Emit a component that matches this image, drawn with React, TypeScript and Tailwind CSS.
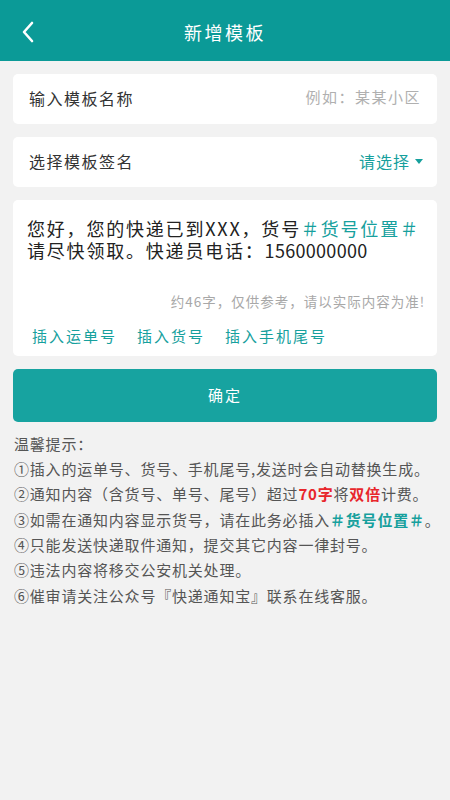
import React from 'react';

const font = { fontFamily: '"Noto Sans CJK SC", "Noto Sans", sans-serif' };

const BackIcon = () => (
  <svg width="14" height="22" viewBox="0 0 14 22" fill="none">
    <path d="M11 2 L3 11 L11 20" stroke="white" strokeWidth="2.6" strokeLinecap="round" strokeLinejoin="round" />
  </svg>
);

const tips: React.ReactNode[] = [
  '①插入的运单号、货号、手机尾号,发送时会自动替换生成。',
  <>
    ②通知内容（含货号、单号、尾号）超过<span className="font-bold text-[#e8262b]">70字</span>将
    <span className="font-bold text-[#e8262b]">双倍</span>计费。
  </>,
  <>
    ③如需在通知内容显示货号，请在此务必插入<span className="font-bold text-[#16a09d]">＃货号位置＃</span>。
  </>,
  '④只能发送快递取件通知，提交其它内容一律封号。',
  '⑤违法内容将移交公安机关处理。',
  '⑥催审请关注公众号『快递通知宝』联系在线客服。',
];

export default function App() {
  return (
    <div className="w-[450px] min-h-[800px] bg-[#f2f2f2]" style={font}>
      <header className="relative h-[61px] bg-[#0b9a97] flex items-center justify-center pt-[3px]">
        <button className="absolute left-[21px] top-[21px]">
          <BackIcon />
        </button>
        <h1 className="text-white text-[18px] tracking-[2.5px]">新增模板</h1>
      </header>

      <div className="px-[13px] pt-[13px] flex flex-col gap-[13px]">
        <div className="h-[50px] bg-white rounded-[5px] flex items-center justify-between pl-[16px] pr-[16px] pb-[3px]">
          <span className="text-[16px] text-[#333] tracking-[1.5px]">输入模板名称</span>
          <span className="text-[15px] text-[#b0b0b0] tracking-[1.5px]">例如：某某小区</span>
        </div>

        <div className="h-[50px] bg-white rounded-[5px] flex items-center justify-between pl-[16px] pr-[14px] pb-[2px]">
          <span className="text-[16px] text-[#333] tracking-[1.5px]">选择模板签名</span>
          <span className="flex items-center gap-[5px] text-[16px] text-[#16a09d] tracking-[1px]">
            请选择
            <svg width="8" height="5" viewBox="0 0 8 5">
              <path d="M0 0 H8 L4 5 Z" fill="#16a09d" />
            </svg>
          </span>
        </div>

        <div className="bg-white rounded-[5px] pl-[14px] pr-[12px] pt-[17px] pb-[8px]">
          <p className="text-[18px] leading-[22px] text-[#222] tracking-[1.8px] whitespace-nowrap">
            您好，您的快递已到XXX，货号<span className="text-[#16a09d]">＃货号位置＃</span>
          </p>
          <p className="text-[18px] leading-[22px] text-[#222] tracking-[1.8px] whitespace-nowrap">
            请尽快领取。快递员电话：<span className="tracking-[0.3px]">1560000000</span>
          </p>
          <p className="mt-[30px] text-right text-[13.5px] text-[#a8a8a8] tracking-[1px]">约46字，仅供参考，请以实际内容为准!</p>
          <div className="mt-[14px] pl-[5px] flex gap-[20px] text-[15px] text-[#16a09d] tracking-[2px]">
            <span>插入运单号</span>
            <span>插入货号</span>
            <span>插入手机尾号</span>
          </div>
        </div>

        <button className="h-[53px] bg-[#17a3a0] rounded-[5px] text-white text-[15px] tracking-[2px]">确定</button>
      </div>

      <div className="px-[14px] pt-[9px] text-[15px] leading-[25.3px] text-[#555] tracking-[0.8px] whitespace-nowrap">
        <p>温馨提示：</p>
        {tips.map((t, i) => (
          <p key={i}>{t}</p>
        ))}
      </div>
    </div>
  );
}
